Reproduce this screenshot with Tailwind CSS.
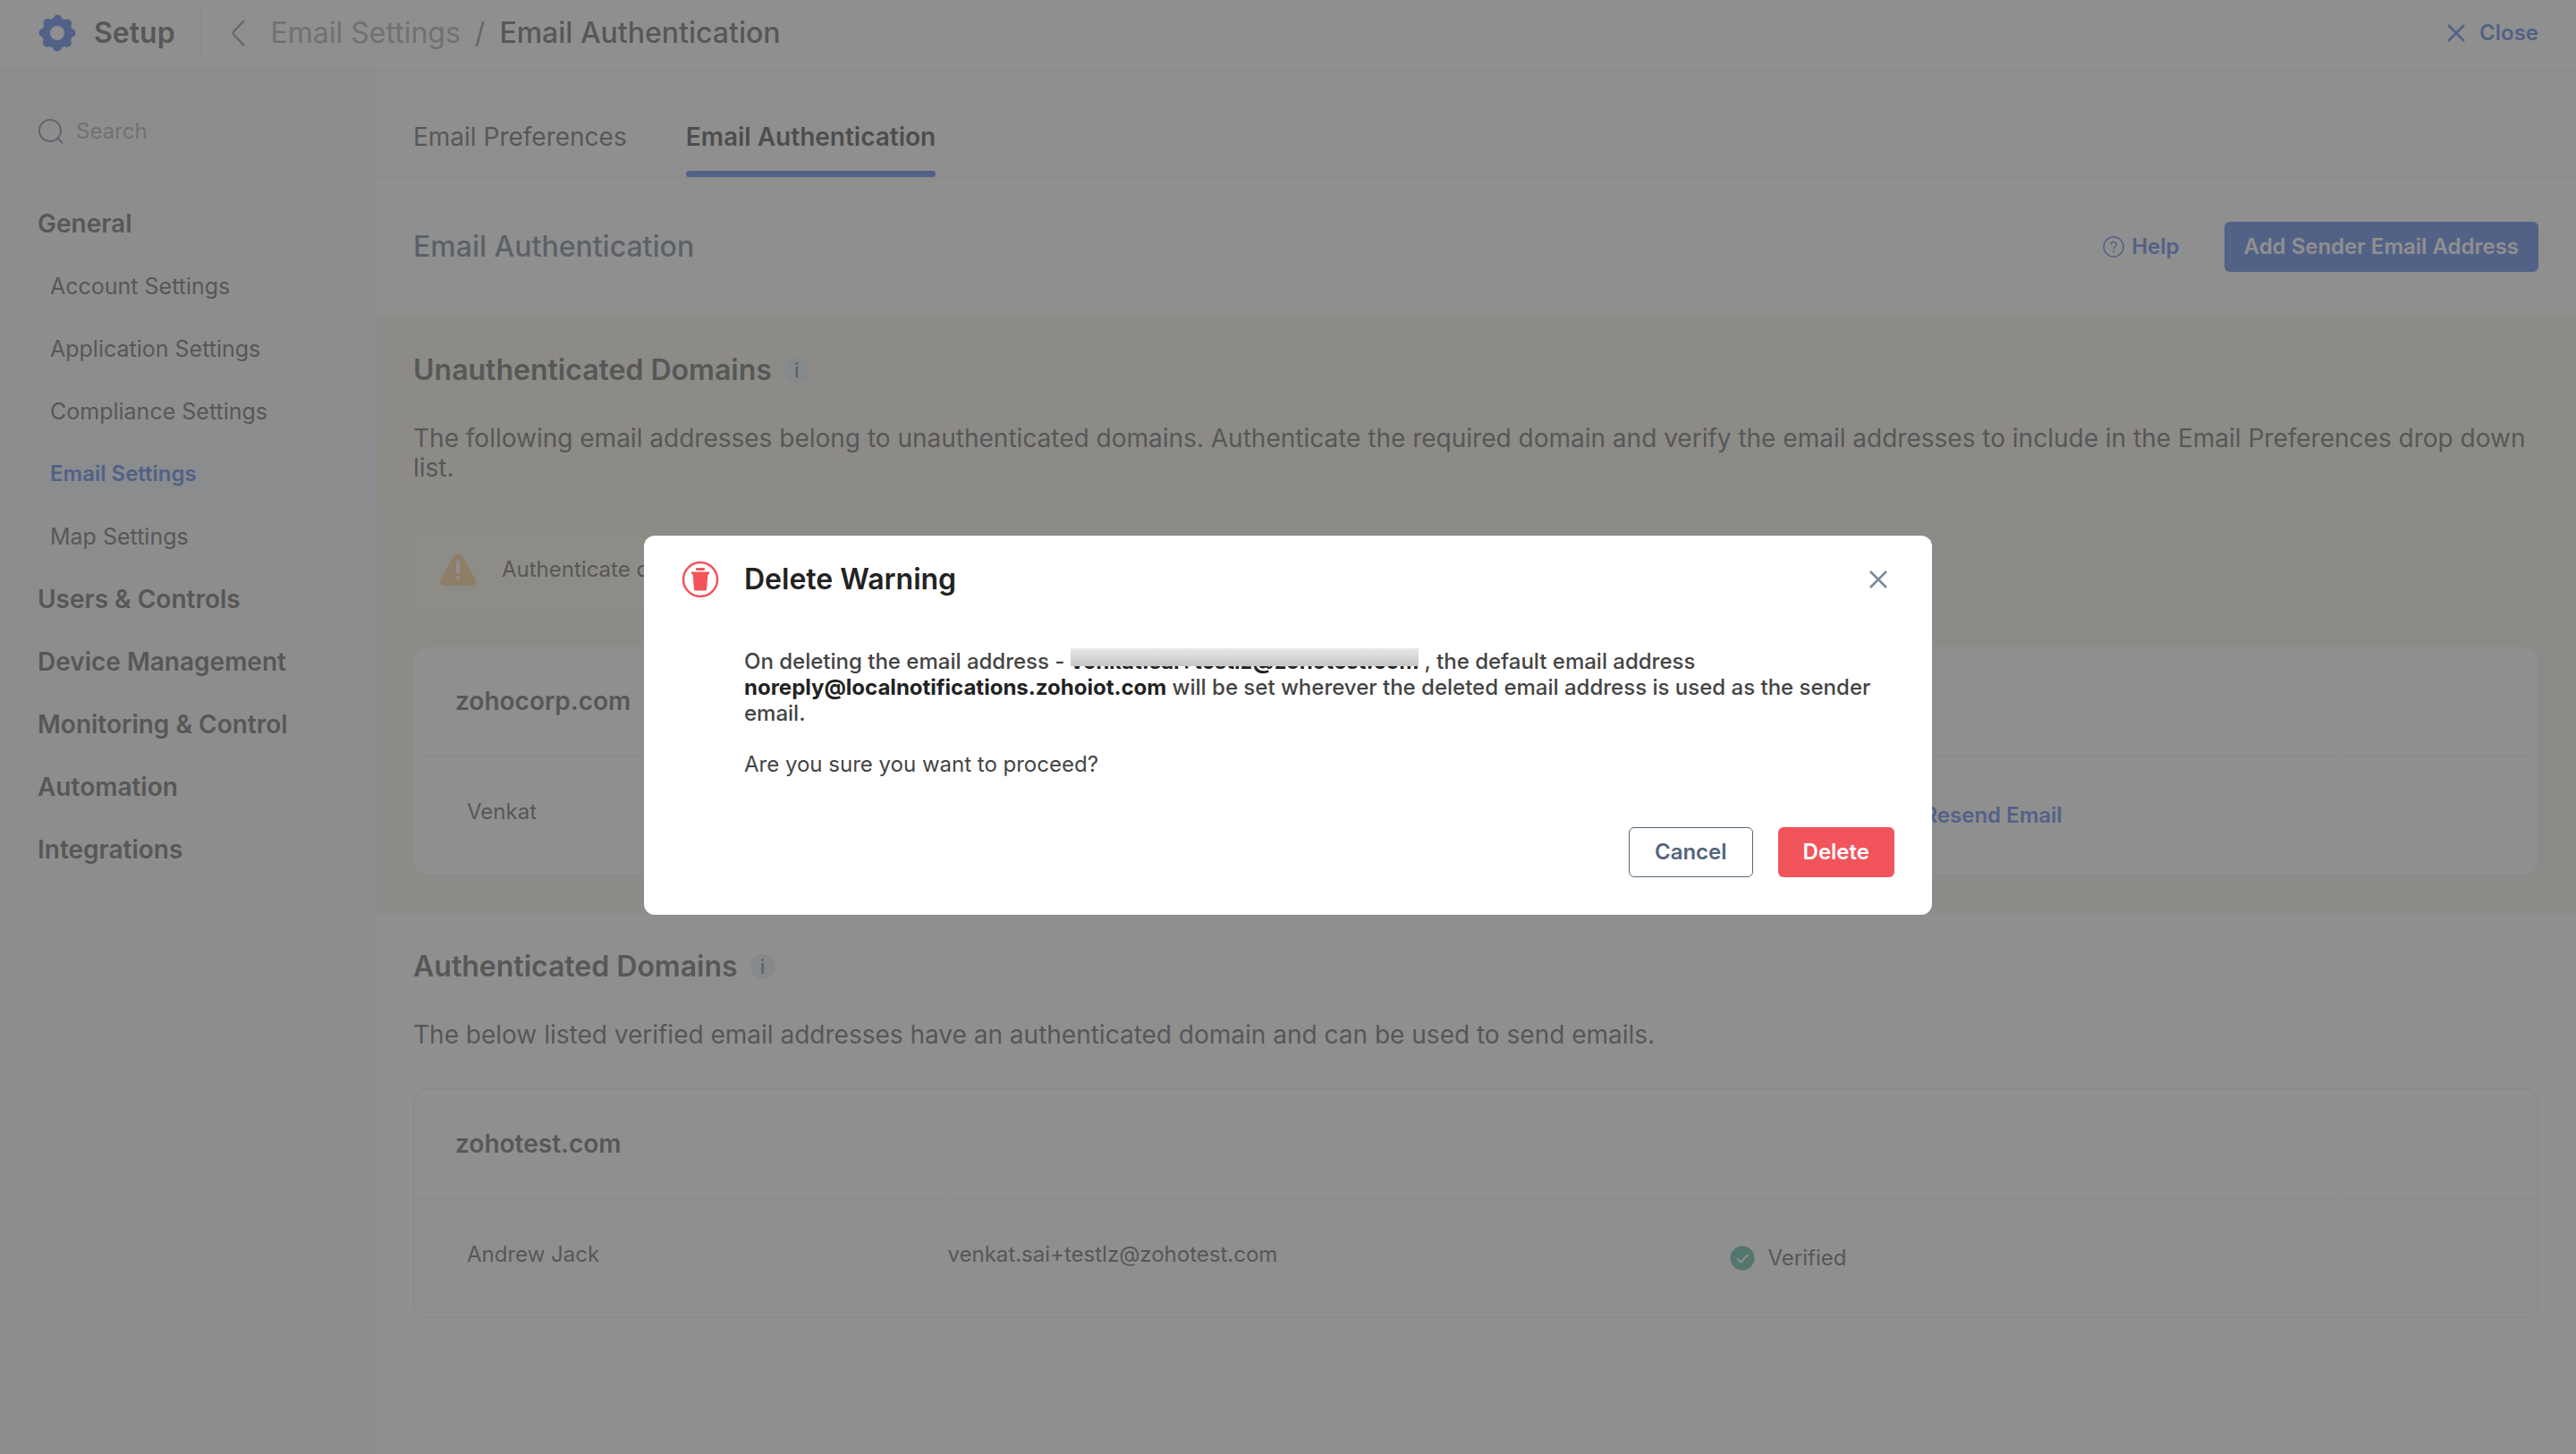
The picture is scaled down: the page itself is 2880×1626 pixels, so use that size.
<!DOCTYPE html>
<html lang="en">
  <head>
    <meta charset="UTF-8" />
    <meta name="viewport" content="width=device-width, initial-scale=1.0" />
    <title>Setup - Email Authentication</title>
    <script src="https://cdn.jsdelivr.net/npm/@tailwindcss/browser@4"></script>
  </head>
  <body class="bg-white text-[#444] text-[24px] leading-[30px] font-['Inter',sans-serif]">
    <div class="flex flex-col min-h-screen">
      <!-- Top bar -->
      <header class="flex items-center h-[79px] pb-1 border-b border-[#e8e8e8] pl-[43px] pr-[42px] text-[32px]">
        <svg class="size-[42px] text-[#3564e2]" viewBox="0 0 42 42" fill="none" stroke="currentColor">
          <circle cx="21" cy="21" r="12.5" stroke-width="9" />
          <circle cx="21" cy="21" r="15.5" stroke-width="10" stroke-linecap="round" stroke-dasharray="0 12.17" />
        </svg>
        <span class="ml-5 font-semibold">Setup</span>
        <span class="ml-7 w-px h-14 bg-[#e0e0e0]"></span>
        <button type="button" aria-label="Back" class="ml-8">
          <svg class="w-[18px] h-[30px] text-[#63718a]" viewBox="0 0 18 30" fill="none" stroke="currentColor" stroke-width="2"><path d="M16 1 4.500 13q-1.500 2 0 4L16 29" /></svg>
        </button>
        <nav class="ml-7 flex items-center gap-4">
          <a href="#" class="text-[#999]">Email Settings</a>
          <span class="text-[#777]">/</span>
          <span class="font-medium">Email Authentication</span>
        </nav>
        <button type="button" class="ml-auto flex items-center gap-4 text-[24px] font-semibold text-[#3564e2]">
          <svg class="size-5" viewBox="0 0 20 20" fill="none" stroke="currentColor" stroke-width="2.500"><path d="M1 1 19 19M19 1 1 19" /></svg>
          Close
        </button>
      </header>

      <div class="flex flex-1">
        <!-- Sidebar -->
        <aside class="w-[420px] shrink-0 bg-[#f8f8f8]">
          <label class="flex items-center gap-[14px] h-[136px] pl-[43px]">
            <svg class="size-7 text-[#63718a]" viewBox="0 0 28 28" fill="none" stroke="currentColor" stroke-width="2"><circle cx="13" cy="13" r="12" /><path d="m21 21 6 6" /></svg>
            <input type="text" placeholder="Search" aria-label="Search" class="w-64 text-[24px] placeholder:text-[#999] outline-none" />
          </label>
          <nav class="flex flex-col text-[25px]">
            <a href="#" class="flex items-center h-[70px] pl-[42px] text-[28px] font-semibold">General</a>
            <a href="#" class="flex items-center h-[70px] pl-14">Account Settings</a>
            <a href="#" class="flex items-center h-[70px] pl-14">Application Settings</a>
            <a href="#" class="flex items-center h-[70px] pl-14">Compliance Settings</a>
            <a href="#" class="flex items-center h-[70px] pl-14 bg-[#eef3fa] text-[24px] font-semibold text-[#3564e2]">Email Settings</a>
            <a href="#" class="flex items-center h-[70px] pl-14">Map Settings</a>
            <a href="#" class="flex items-center h-[70px] pl-[42px] text-[28px] font-semibold">Users &amp; Controls</a>
            <a href="#" class="flex items-center h-[70px] pl-[42px] text-[28px] font-semibold">Device Management</a>
            <a href="#" class="flex items-center h-[70px] pl-[42px] text-[28px] font-semibold">Monitoring &amp; Control</a>
            <a href="#" class="flex items-center h-[70px] pl-[42px] text-[28px] font-semibold">Automation</a>
            <a href="#" class="flex items-center h-[70px] pl-[42px] text-[28px] font-semibold">Integrations</a>
          </nav>
        </aside>

        <main class="flex-1">
          <!-- Tabs -->
          <div class="flex gap-[66px] h-[120px] px-[42px] border-b border-[#e8e8e8] text-[28px]">
            <a href="#" class="flex items-center pt-7">Email Preferences</a>
            <a href="#" class="relative flex items-center pt-7 font-semibold text-[#222]">
              Email Authentication
              <span class="absolute inset-x-0 bottom-0 h-[7px] rounded-sm bg-[#3564e2]"></span>
            </a>
          </div>

          <div class="flex items-center h-[154px] px-[42px]">
            <h1 class="text-[32px] font-medium text-[#56657d]">Email Authentication</h1>
            <a href="#" class="ml-auto flex items-center gap-2 font-semibold text-[#3564e2]">
              <svg class="size-6" viewBox="0 0 24 24" fill="none" stroke="currentColor" stroke-width="1.500"><circle cx="12" cy="12" r="11" /><path d="M9 9.500a3 3 0 1 1 4.500 2.600q-1.500.9-1.500 2.400" /><path d="M12 16.500v2" stroke-width="2" /></svg>
              Help
            </a>
            <button type="button" class="ml-[50px] h-14 px-[22px] rounded-md bg-[#3564e2] text-white font-semibold">Add Sender Email Address</button>
          </div>

          <!-- Unauthenticated domains -->
          <section class="px-[42px] pt-11 pb-[43px] bg-[#f8f1e4]">
            <div class="flex items-center gap-[14px] h-[34px]">
              <h2 class="text-[32px] font-semibold">Unauthenticated Domains</h2>
              <span class="flex items-center justify-center size-7 rounded-full bg-[#e2e9f1] text-[22px] font-medium text-[#56657d]">i</span>
            </div>
            <p class="mt-[43px] text-[28px] leading-[33px]">The following email addresses belong to unauthenticated domains. Authenticate the required domain and verify the email addresses to include in the Email Preferences drop down list.</p>
            <div class="mt-[55px] flex items-center w-[1064px] h-[84px] pl-[29px] gap-7 bg-[#fbf4e3]">
              <svg class="w-[42px] h-9" viewBox="0 0 42 36"><path d="M16 3q5-6 10 0L40 28q3 7-4 8H6q-7-1-4-8z" fill="#fac27a" /><path d="M21 8v14M21 25v4" stroke="#fff" stroke-width="4" /></svg>
              <span>Authenticate domain</span>
            </div>
            <div class="mt-[43px] rounded-2xl border border-[#e6edf5] bg-white">
              <table class="w-full table-fixed border-separate border-spacing-x-1 border-spacing-y-0 text-left">
                <thead>
                  <tr class="h-[123px]">
                    <th class="w-[25%] pl-[42px] border-b border-[#e6e6e6] text-[28px] font-semibold">zohocorp.com</th>
                    <th class="w-[37%] border-b border-[#e6e6e6]"></th>
                    <th class="w-[29%] border-b border-[#e6e6e6]"></th>
                    <th class="border-b border-[#e6e6e6]"></th>
                  </tr>
                </thead>
                <tbody>
                  <tr class="h-[132px]">
                    <td class="pl-[55px] pb-2">Venkat</td>
                    <td></td>
                    <td><a href="#" class="ml-[216px] font-semibold text-[#3564e2]">Resend Email</a></td>
                    <td></td>
                  </tr>
                </tbody>
              </table>
            </div>
          </section>

          <!-- Authenticated domains -->
          <section class="px-[42px] pt-[42px] pb-[43px]">
            <div class="flex items-center gap-[14px] h-[34px]">
              <h2 class="text-[32px] font-semibold">Authenticated Domains</h2>
              <span class="flex items-center justify-center size-7 rounded-full bg-[#e2e9f1] text-[22px] font-medium text-[#56657d]">i</span>
            </div>
            <p class="mt-[43px] text-[28px] leading-[33px]">The below listed verified email addresses have an authenticated domain and can be used to send emails.</p>
            <div class="mt-[43px] rounded-2xl border border-[#e6e6e6] bg-white">
              <table class="w-full table-fixed border-separate border-spacing-x-1 border-spacing-y-0 text-left">
                <thead>
                  <tr class="h-[123px]">
                    <th class="w-[25%] pl-[42px] border-b border-[#e6e6e6] text-[28px] font-semibold">zohotest.com</th>
                    <th class="w-[37%] border-b border-[#e6e6e6]"></th>
                    <th class="w-[29%] border-b border-[#e6e6e6]"></th>
                    <th class="border-b border-[#e6e6e6]"></th>
                  </tr>
                </thead>
                <tbody>
                  <tr class="h-[132px]">
                    <td class="pl-[55px] pb-2">Andrew Jack</td>
                    <td class="pb-2">venkat.sai+testlz@zohotest.com</td>
                    <td>
                      <span class="flex items-center gap-[14px]">
                        <svg class="size-7" viewBox="0 0 28 28" fill="none"><circle cx="14" cy="14" r="13.500" fill="#35ab8c" /><path d="m8 14.500 4 4 8.500-8.500" stroke="#fff" stroke-width="2" /></svg>
                        Verified
                      </span>
                    </td>
                    <td></td>
                  </tr>
                </tbody>
              </table>
            </div>
          </section>
        </main>
      </div>
    </div>

    <!-- Delete dialog -->
    <div class="fixed inset-0 flex items-center justify-center pb-1 bg-[#606060]/70">
      <div role="dialog" aria-labelledby="dialog-title" class="w-1/2 p-[42px] pt-7 rounded-xl bg-white">
        <div class="flex items-center h-[42px]">
          <svg class="size-[42px]" viewBox="0 0 42 42" fill="#f2545b"><circle cx="21" cy="21" r="19" fill="none" stroke="#f2545b" stroke-width="2.500" /><rect x="16" y="8" width="10" height="3" rx="1" /><path d="M11 12.500h20V15h-1.500L28 32.500q0 1-1 1H15q-1 0-1-1L12.500 15H11z" /></svg>
          <h2 id="dialog-title" class="ml-7 text-[32px] font-semibold text-[#222]">Delete Warning</h2>
          <button type="button" aria-label="Close dialog" class="ml-auto mr-2">
            <svg class="size-5 text-[#7a889c]" viewBox="0 0 20 20" fill="none" stroke="currentColor" stroke-width="2.500"><path d="M1 1 19 19M19 1 1 19" /></svg>
          </button>
        </div>
        <div class="ml-[70px] mt-14 leading-[29px]">
          <p class="font-medium">
            On deleting the email address -
            <span class="relative inline-block font-bold text-[#222]">venkat.sai+testlz@zohotest.com<span class="absolute inset-x-0 top-0 h-5 bg-linear-to-b from-[#e8e8e8] to-[#c6c6c6]"></span></span>
            , the default email address <b class="font-bold text-[#222]">noreply@localnotifications.zohoiot.com</b> will be set wherever the deleted email address is used as the sender email.
          </p>
          <p class="mt-7">Are you sure you want to proceed?</p>
        </div>
        <div class="mt-14 flex justify-end gap-7 font-semibold">
          <button type="button" class="h-14 px-7 rounded-md border border-[#56657d] text-[#56657d]">Cancel</button>
          <button type="button" class="h-14 px-7 rounded-md bg-[#f2545b] text-white">Delete</button>
        </div>
      </div>
    </div>
  </body>
</html>
